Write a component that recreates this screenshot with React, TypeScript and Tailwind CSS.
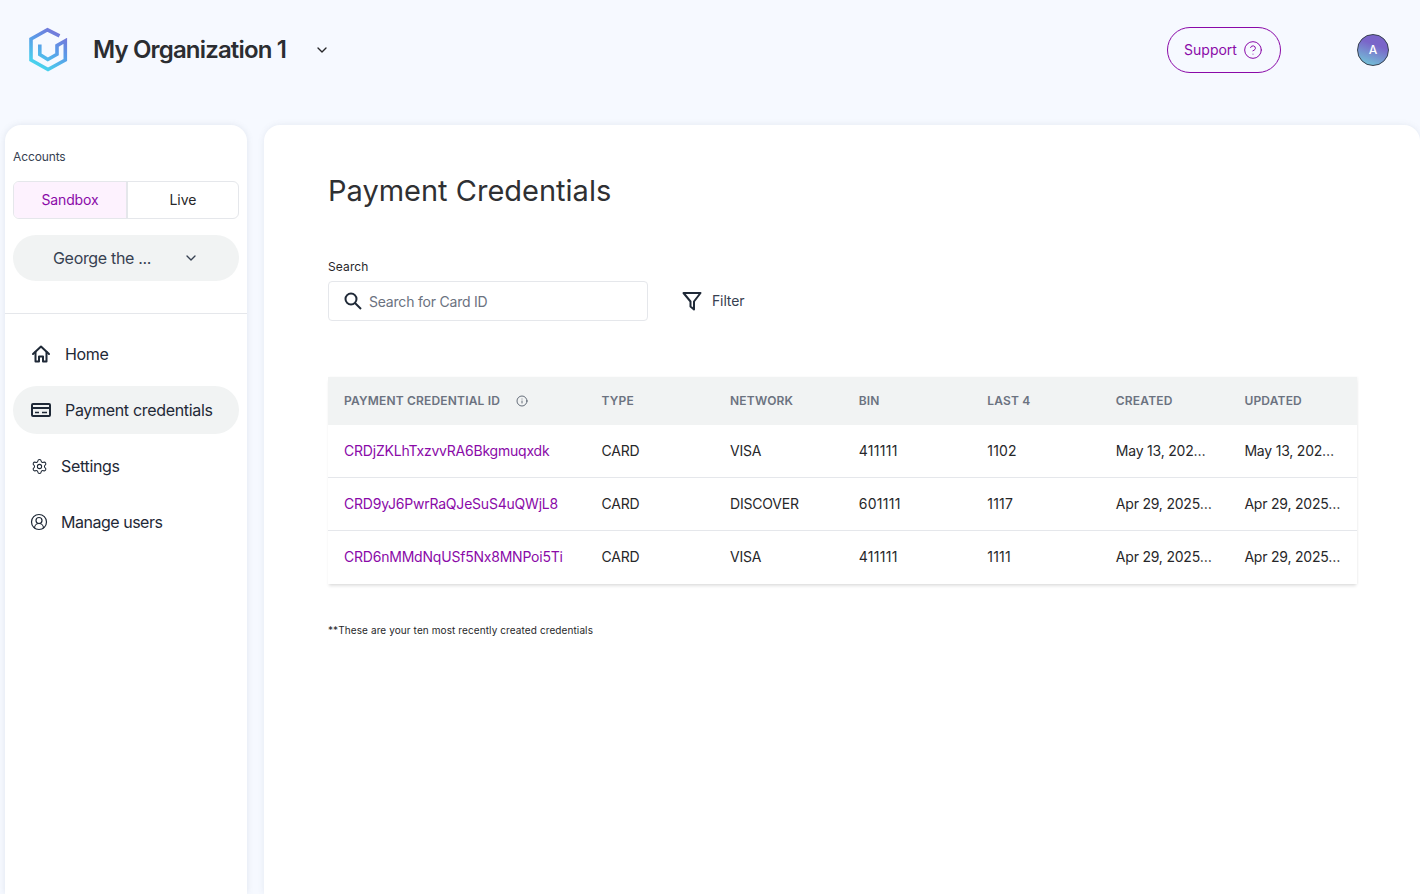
import React from 'react';
import { ChevronDown, CircleHelp, CircleUserRound, Info, Settings } from 'lucide-react';

const rows = [
    { id: 'CRDjZKLhTxzvvRA6Bkgmuqxdk', type: 'CARD', network: 'VISA', bin: '411111', last4: '1102', created: 'May 13, 202…', updated: 'May 13, 202…' },
    { id: 'CRD9yJ6PwrRaQJeSuS4uQWjL8', type: 'CARD', network: 'DISCOVER', bin: '601111', last4: '1117', created: 'Apr 29, 2025…', updated: 'Apr 29, 2025…' },
    { id: 'CRD6nMMdNqUSf5Nx8MNPoi5Ti', type: 'CARD', network: 'VISA', bin: '411111', last4: '1111', created: 'Apr 29, 2025…', updated: 'Apr 29, 2025…' },
];

const Logo = () => (
    <svg width="48" height="48" viewBox="24 26 48 48" fill="none">
        <defs>
            <linearGradient id="logoGrad" x1="62" y1="30" x2="38" y2="70" gradientUnits="userSpaceOnUse">
                <stop offset="0" stopColor="#7b6fd6" />
                <stop offset="0.45" stopColor="#5a9be8" />
                <stop offset="1" stopColor="#45dcee" />
            </linearGradient>
        </defs>
        <path d="M59.5 35.8L47.5 29.8L31 39V60L48 69.5L65.3 60V40.8L57 45.6V54.3L47.8 59.5L39.8 54.6V44.5" stroke="url(#logoGrad)" strokeWidth="3.6" />
    </svg>
);

const HomeIcon = () => (
    <svg width="20" height="20" viewBox="0 0 20 20" fill="none" stroke="#1f2937" strokeWidth="2" strokeLinejoin="round" strokeLinecap="round">
        <path d="M2 10L10 2.5L18 10" />
        <path d="M4.5 8V17.5H8V12.5H12V17.5H15.5V8" />
    </svg>
);

const CardIcon = () => (
    <svg width="20" height="14" viewBox="0 0 20 14" fill="none" stroke="#1f2937" strokeWidth="2">
        <rect x="1" y="1" width="18" height="12" rx="1" />
        <path d="M1 5h18" />
        <path d="M4 9.5h4M11 9.5h5" strokeWidth="1.5" />
    </svg>
);

const SearchIcon = () => (
    <svg width="20" height="20" viewBox="0 0 20 20" fill="none" stroke="#1f2937" strokeWidth="2">
        <circle cx="8" cy="8" r="5.5" />
        <path d="M12 12l6 6" />
    </svg>
);

const FilterIcon = () => (
    <svg width="20" height="20" viewBox="0 0 20 20" fill="none" stroke="#1f2937" strokeWidth="2" strokeLinejoin="round">
        <path d="M1.5 2h17L12 10.5V18.5l-3.5-3v-5z" />
    </svg>
);

export default function App() {
    return (
        <div className="h-screen overflow-hidden bg-[#f6f9ff] font-['Inter',sans-serif] text-[#27272a]">
            <header className="flex h-[125px] items-center pb-[25px] pl-[24px] pr-[31px]">
                <Logo />
                <h1 className="ml-[21px] text-[24px] font-semibold tracking-[-0.035em] text-[#2b2d31]">My Organization 1</h1>
                <ChevronDown className="ml-[28px] h-4 w-4" />
                <button className="ml-auto flex h-[46px] w-[114px] items-center justify-center gap-[6px] rounded-full border border-[#8a0aa8] pr-px text-sm text-[#8a0aa8]">
                    Support
                    <CircleHelp className="h-5 w-5" strokeWidth={1.2} />
                </button>
                <div className="ml-[76px] flex h-8 w-8 items-center justify-center rounded-full border border-[#374151] bg-[linear-gradient(200deg,#7a65c9_35%,#72c8d8_95%)] text-xs font-medium text-white">
                    A
                </div>
            </header>

            <div className="flex h-[769px] gap-[17px] pl-[5px]">
                <aside className="w-[242px] shrink-0 rounded-t-2xl bg-white shadow-[0_0_6px_rgba(100,116,139,0.15)]">
                    <div className="border-b border-[#e5e7eb] px-2 pb-8 pt-[24px]">
                        <p className="text-xs leading-4 tracking-[-0.01em] text-[#374151]">Accounts</p>
                        <div className="mt-4 flex h-[38px] overflow-hidden rounded-md border border-[#e5e7eb] text-sm">
                            <div className="flex w-[114px] items-center justify-center border-r-2 border-[#e5e7eb] bg-[#fdf2fe] tracking-[-0.01em] text-[#8a0aa8]">Sandbox</div>
                            <div className="flex flex-1 items-center justify-center">Live</div>
                        </div>
                        <div className="mt-4 flex h-[46px] items-center rounded-full bg-[#f1f3f3] pl-10 pr-[40px] text-base tracking-[-0.02em] text-[#374151]">
                            <span>George the ...</span>
                            <ChevronDown className="ml-auto h-4 w-4" />
                        </div>
                    </div>
                    <nav className="flex flex-col gap-2 px-2 pt-4 text-base tracking-[-0.02em] text-[#1f2937]">
                        <div className="flex h-12 items-center rounded-full pl-[18px]">
                            <HomeIcon />
                            <span className="ml-[14px]">Home</span>
                        </div>
                        <div className="flex h-12 items-center rounded-full bg-[#f1f3f3] pl-[18px]">
                            <CardIcon />
                            <span className="ml-[14px]">Payment credentials</span>
                        </div>
                        <div className="flex h-12 items-center rounded-full pl-[18px]">
                            <Settings className="h-[17px] w-[17px]" strokeWidth={1.5} />
                            <span className="ml-[13px]">Settings</span>
                        </div>
                        <div className="flex h-12 items-center rounded-full pl-[17px]">
                            <CircleUserRound className="h-[18px] w-[18px]" strokeWidth={1.6} />
                            <span className="ml-[13px] tracking-[-0.03em]">Manage users</span>
                        </div>
                    </nav>
                </aside>

                <main className="flex-1 rounded-t-2xl bg-white pl-16 pr-[63px] pt-[47px] shadow-[0_0_6px_rgba(100,116,139,0.12)]">
                    <h2 className="text-[29px] leading-[38px] text-[#2f3033]">Payment Credentials</h2>
                    <p className="mt-[49px] text-xs leading-4 tracking-[0.01em]">Search</p>
                    <div className="mt-[6px] flex items-center">
                        <div className="flex h-10 w-80 items-center rounded border border-[#e5e7eb] pl-[14px]">
                            <SearchIcon />
                            <span className="ml-[6px] pt-px text-sm tracking-[-0.015em] text-[#6b7280]">Search for Card ID</span>
                        </div>
                        <div className="ml-[34px] flex items-center gap-2 text-sm tracking-[-0.01em] text-[#374151]">
                            <FilterIcon />
                            <span className="ml-[2px]">Filter</span>
                        </div>
                    </div>

                    <div className="mt-14 shadow-[0_3px_3px_-1px_rgba(0,0,0,0.12),1px_0_2px_rgba(0,0,0,0.04)]">
                        <div className="grid h-12 grid-cols-[257.5px_repeat(6,1fr)] items-center bg-[#f1f3f3] text-xs font-semibold tracking-[0.015em] text-[#6b7280]">
                            <div className="flex items-center pl-4">
                                PAYMENT CREDENTIAL ID
                                <Info className="ml-4 h-3 w-3 text-[#374151]" strokeWidth={1.5} />
                            </div>
                            <div className="pl-4">TYPE</div>
                            <div className="pl-4">NETWORK</div>
                            <div className="pl-4">BIN</div>
                            <div className="pl-4">LAST 4</div>
                            <div className="pl-4">CREATED</div>
                            <div className="pl-4">UPDATED</div>
                        </div>
                        {rows.map((r, i) => (
                            <div
                                key={r.id}
                                className={`grid h-[53px] grid-cols-[257.5px_repeat(6,1fr)] items-center border-b text-sm tracking-[-0.015em] text-[#27272a] ${i < rows.length - 1 ? 'border-[#e5e7eb]' : 'border-transparent'}`}
                            >
                                <div className="pl-4 text-[#8a0aa8]">{r.id}</div>
                                <div className="pl-4">{r.type}</div>
                                <div className="pl-4">{r.network}</div>
                                <div className="pl-4 tracking-[0.3px]">{r.bin}</div>
                                <div className="pl-4 tracking-[0.2px]">{r.last4}</div>
                                <div className="pl-4">{r.created}</div>
                                <div className="pl-4">{r.updated}</div>
                            </div>
                        ))}
                    </div>

                    <p className="mt-10 text-[10px] leading-3 tracking-[0.01em] text-[#27272a]">**These are your ten most recently created credentials</p>
                </main>
            </div>
        </div>
    );
}
